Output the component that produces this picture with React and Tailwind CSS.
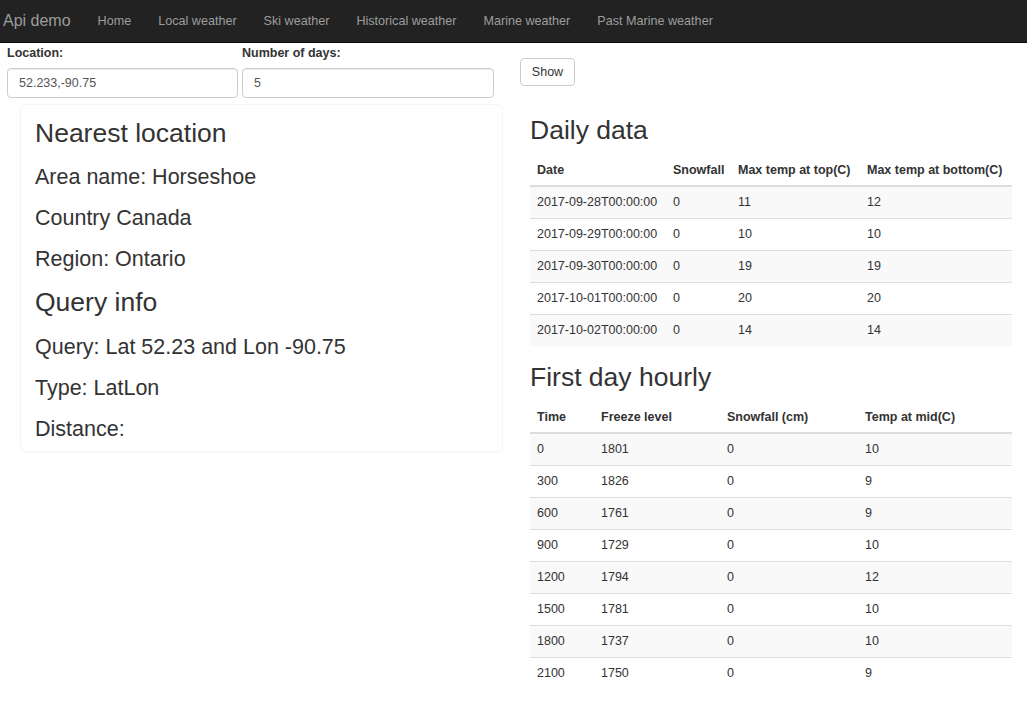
const NAV = ['Home', 'Local weather', 'Ski weather', 'Historical weather', 'Marine weather', 'Past Marine weather']

const DAILY = [
  ['2017-09-28T00:00:00', '0', '11', '12'],
  ['2017-09-29T00:00:00', '0', '10', '10'],
  ['2017-09-30T00:00:00', '0', '19', '19'],
  ['2017-10-01T00:00:00', '0', '20', '20'],
  ['2017-10-02T00:00:00', '0', '14', '14'],
]

const HOURLY = [
  ['0', '1801', '0', '10'],
  ['300', '1826', '0', '9'],
  ['600', '1761', '0', '9'],
  ['900', '1729', '0', '10'],
  ['1200', '1794', '0', '12'],
  ['1500', '1781', '0', '10'],
  ['1800', '1737', '0', '10'],
  ['2100', '1750', '0', '9'],
]

function DataTable({ headers, widths, rows }) {
  return (
    <table className="w-full table-fixed border-collapse text-[12.5px] text-[#333]">
      <thead>
        <tr className="border-b-2 border-[#ddd]">
          {headers.map((h, i) => (
            <th key={h} style={{ width: widths[i] }} className="px-[7px] pt-[9px] pb-[6px] text-left align-bottom font-bold leading-[17px] whitespace-nowrap">
              {h}
            </th>
          ))}
        </tr>
      </thead>
      <tbody>
        {rows.map((r, i) => (
          <tr key={i} className={`border-t border-[#ddd] first:border-t-0 ${i % 2 === 0 ? 'bg-[#f9f9f9]' : 'bg-white'}`}>
            {r.map((c, j) => (
              <td key={j} className="px-[7px] py-[7px] leading-[17px] whitespace-nowrap">{c}</td>
            ))}
          </tr>
        ))}
      </tbody>
    </table>
  )
}

export default function App() {
  return (
    <div className="min-h-[705px] bg-white font-['Liberation_Sans',Arial,sans-serif] text-[#333]">
      <nav className="flex h-[43px] items-center border-b border-[#080808] bg-[#222]">
        <span className="pl-[3px] pr-[13px] text-[16px] text-[#9d9d9d]">Api demo</span>
        <ul className="flex gap-[27px] pl-[14px] text-[12.6px] text-[#9d9d9d]">
          {NAV.map((n) => (
            <li key={n}>{n}</li>
          ))}
        </ul>
      </nav>

      <div className="flex items-start">
        <div className="ml-[7px] mt-[1px] w-[231px]">
          <label className="block text-[12.5px] font-bold leading-[18px]">Location:</label>
          <input readOnly value="52.233,-90.75" className="mt-[6px] h-[30px] w-full rounded border border-[#ccc] px-[11px] text-[12.5px] text-[#555] shadow-[inset_0_1px_1px_rgba(0,0,0,0.075)] outline-none" />
        </div>
        <div className="ml-[4px] mt-[1px] w-[252px]">
          <label className="block text-[12.5px] font-bold leading-[18px]">Number of days:</label>
          <input readOnly value="5" className="mt-[6px] h-[30px] w-full rounded border border-[#ccc] px-[11px] text-[12.5px] text-[#555] shadow-[inset_0_1px_1px_rgba(0,0,0,0.075)] outline-none" />
        </div>
        <button className="ml-[26px] mt-[15px] h-[28px] w-[55px] rounded border border-[#ccc] bg-white text-[12.5px] text-[#333]">Show</button>
      </div>

      <div className="mt-[6px] flex items-start">
        <div className="ml-[20px] w-[483px] rounded-[6px] border border-[#f5f5f5] px-[14px] pt-[14px] pb-[1px] shadow-[0_1px_1px_rgba(0,0,0,0.02)]">
          <h3 className="mb-[14px] text-[26.5px] leading-[29px] text-[#333]">Nearest location</h3>
          <p className="mb-[11px] text-[21.5px] leading-[30px]">Area name: Horseshoe</p>
          <p className="mb-[11px] text-[21.5px] leading-[30px]">Country Canada</p>
          <p className="mb-[14px] text-[21.5px] leading-[30px]">Region: Ontario</p>
          <h3 className="mb-[15px] text-[26.5px] leading-[29px] text-[#333]">Query info</h3>
          <p className="mb-[11px] text-[21.5px] leading-[30px]">Query: Lat 52.23 and Lon -90.75</p>
          <p className="mb-[11px] text-[21.5px] leading-[30px]">Type: LatLon</p>
          <p className="mb-[6px] text-[21.5px] leading-[30px]">Distance:</p>
        </div>

        <div className="ml-[27px] w-[482px] pt-[12px]">
          <h3 className="mb-[8px] text-[26.5px] leading-[29px]">Daily data</h3>
          <DataTable
            headers={['Date', 'Snowfall', 'Max temp at top(C)', 'Max temp at bottom(C)']}
            widths={[136, 65, 129, 152]}
            rows={DAILY}
          />
          <h3 className="mt-[17px] mb-[8px] text-[26.5px] leading-[29px]">First day hourly</h3>
          <DataTable
            headers={['Time', 'Freeze level', 'Snowfall (cm)', 'Temp at mid(C)']}
            widths={[64, 126, 138, 154]}
            rows={HOURLY}
          />
        </div>
      </div>
    </div>
  )
}
